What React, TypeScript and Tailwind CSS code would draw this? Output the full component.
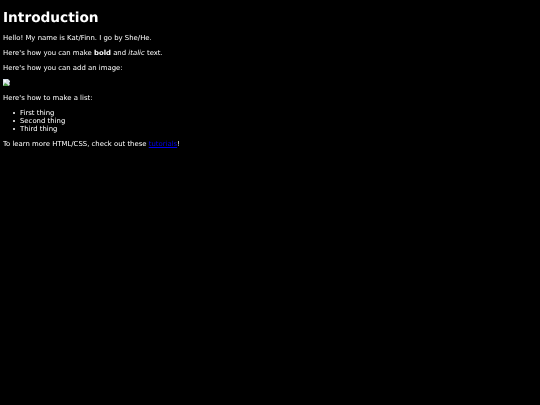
function Item({ children }: { children: string }) {
  return (
    <li className="flex items-center gap-[5px]">
      <span className="w-[2px] h-[2px] rounded-full bg-white" />
      {children}
    </li>
  );
}

export default function App() {
  return (
    <div className="min-h-[405px] bg-black text-white p-[3px] font-['DejaVu_Sans',sans-serif] text-[6.9px] leading-[8px] antialiased [text-rendering:geometricPrecision]">
      <div className="flex flex-col items-start blur-[0.3px]">
        <h1 className="text-[13.7px] leading-[16px] font-bold mt-[7px] mb-[8px]">Introduction</h1>
        <p className="mb-[7px]">Hello! My name is Kat/Finn. I go by She/He.</p>
        <p className="mb-[7px]">Here's how you can make <b>bold</b> and <i>italic</i> text.</p>
        <p className="mb-[7px]">Here's how you can add an image:</p>
        <svg width="8" height="8" viewBox="0 0 8 8" className="mb-[7px]">
          <path d="M0 0h5l2 2v1l-1 1 1 1-1 2H0z" fill="#d5dde6" />
          <path d="M0 7l2-3 2 1 2 2z" fill="#4f9a4a" />
          <circle cx="2" cy="2" r="1" fill="#fff" />
        </svg>
        <p className="mb-[7px]">Here's how to make a list:</p>
        <ul className="pl-[10px] mb-[7px]">
          <Item>First thing</Item>
          <Item>Second thing</Item>
          <Item>Third thing</Item>
        </ul>
        <p>To learn more HTML/CSS, check out these <a href="#" className="underline text-[#0000ee]">tutorials</a>!</p>
      </div>
    </div>
  );
}
